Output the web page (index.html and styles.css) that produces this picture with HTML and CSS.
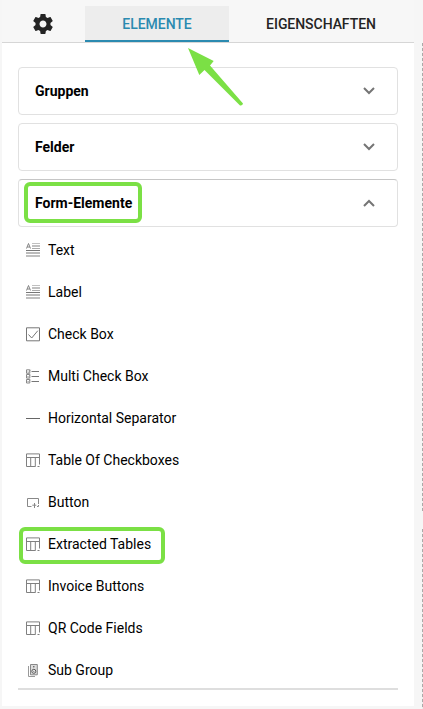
FILE: index.html
```html
<!DOCTYPE html>
<html lang="de">
<head>
<meta charset="utf-8">
<title>Elemente</title>
<link rel="stylesheet" href="styles.css">
</head>
<body>
<svg class="symbols" aria-hidden="true">
  <symbol id="lines" viewBox="0 0 14 15">
    <path d="M6 0h8v1H6zM6 2h8v2H6zM0 12h14v2H0z" fill="#c0c0c0"/>
    <path d="M6 5.5h8" stroke="#aaa"/>
    <path d="M0 7.5h14M0 10h14" stroke="#777"/>
    <path d="M.5 5.5L2.5.5l2 5M1.2 4h2.6" stroke="#777" stroke-width=".9"/>
  </symbol>
  <symbol id="check" viewBox="0 0 14 15">
    <path d="M.5 .8h13v13H.5z" stroke="#777"/>
    <path d="M2.5 7.5l3.2 3.5L11.8 3.7" stroke="#777"/>
  </symbol>
  <symbol id="multi" viewBox="0 0 14 15">
    <path d="M.5.8h3.3v3.5H.5zM.5 5.5h3.3v3.6H.5zM.5 10.5h3.3V14H.5z" stroke="#888"/>
    <path d="M1.3 2.5l1 1L4.5.8M1.3 7.4l1 .8 2-2.4M1.3 12.2l1 .8 2-2.2" stroke="#888" stroke-width=".7"/>
    <path d="M5.5 2.5H13M5.5 7.5h7.5M5.5 12.5H13" stroke="#777"/>
  </symbol>
  <symbol id="rule" viewBox="0 0 14 15"><path d="M0 7.5h14" stroke="#666"/></symbol>
  <symbol id="table" viewBox="0 0 14 15">
    <path d="M13.5 11.5V.9H.5v12.6h9M.5 4.5h13M4.7 4.5v9M9.3 4.5v9M11.5 13.5h2" stroke="#808080"/>
  </symbol>
  <symbol id="button" viewBox="0 0 14 15">
    <path d="M5.5 11.5h-4v-8h11v5.5M12.5 10v1.5h-1.5" stroke="#888"/>
    <path d="M8.5 13V8M6.3 10.2h4" stroke="#888"/>
  </symbol>
  <symbol id="group" viewBox="0 0 14 15">
    <path d="M2.5 3v10.5H9" stroke="#999"/>
    <path d="M4.5 1.5h6.8v10.3H4.5z" stroke="#888" fill="#ddd"/>
    <circle cx="7.8" cy="3.8" r=".8" fill="#555"/>
    <circle cx="7.8" cy="8.3" r="2" stroke="#555" fill="#eee"/>
    <circle cx="7.8" cy="8.3" r=".6" fill="#666"/>
  </symbol>
  <symbol id="chevron" viewBox="0 0 12 8"><path d="M1 1l5 5 5-5" stroke="#757575" stroke-width="2"/></symbol>
</svg>
<main class="panel">
  <nav class="tabs">
    <div class="tab settings">
      <svg class="gear" viewBox="2 2 20 20"><path fill="#242424" d="M19.43 12.98c.04-.32.07-.64.07-.98s-.03-.66-.07-.98l2.11-1.65c.19-.15.24-.42.12-.64l-2-3.46c-.12-.22-.39-.3-.61-.22l-2.49 1c-.52-.4-1.08-.73-1.69-.98l-.38-2.65C14.46 2.18 14.25 2 14 2h-4c-.25 0-.46.18-.49.42l-.38 2.65c-.61.25-1.17.59-1.69.98l-2.49-1c-.23-.09-.49 0-.61.22l-2 3.46c-.13.22-.07.49.12.64l2.11 1.65c-.04.32-.07.65-.07.98s.03.66.07.98l-2.11 1.65c-.19.15-.24.42-.12.64l2 3.46c.12.22.39.3.61.22l2.49-1c.52.4 1.08.73 1.69.98l.38 2.65c.03.24.24.42.49.42h4c.25 0 .46-.18.49-.42l.38-2.65c.61-.25 1.17-.59 1.69-.98l2.49 1c.23.09.49 0 .61-.22l2-3.46c.12-.22.07-.49-.12-.64l-2.11-1.65zM12 15.5c-1.93 0-3.5-1.57-3.5-3.5s1.57-3.5 3.5-3.5 3.5 1.57 3.5 3.5-1.57 3.5-3.5 3.5z"/></svg>
    </div>
    <div class="tab active">ELEMENTE</div>
    <div class="tab props">EIGENSCHAFTEN</div>
  </nav>
  <div class="content">
    <section class="card"><span>Gruppen</span><svg class="chevron"><use href="#chevron"/></svg></section>
    <section class="card"><span>Felder</span><svg class="chevron"><use href="#chevron"/></svg></section>
    <section class="card open"><span>Form-Elemente</span><svg class="chevron"><use href="#chevron"/></svg><i class="mark mark-title"></i></section>
    <ul class="items">
      <li><svg><use href="#lines"/></svg><span>Text</span></li>
      <li><svg><use href="#lines"/></svg><span>Label</span></li>
      <li><svg><use href="#check"/></svg><span>Check Box</span></li>
      <li><svg><use href="#multi"/></svg><span>Multi Check Box</span></li>
      <li><svg><use href="#rule"/></svg><span>Horizontal Separator</span></li>
      <li><svg><use href="#table"/></svg><span>Table Of Checkboxes</span></li>
      <li><svg><use href="#button"/></svg><span>Button</span></li>
      <li><svg><use href="#table"/></svg><span>Extracted Tables</span><i class="mark mark-item"></i></li>
      <li><svg><use href="#table"/></svg><span>Invoice Buttons</span></li>
      <li><svg><use href="#table"/></svg><span>QR Code Fields</span></li>
      <li><svg><use href="#group"/></svg><span>Sub Group</span></li>
    </ul>
  </div>
</main>
<aside class="canvas-edge"><div class="edge edge-top"></div><div class="edge edge-bottom"></div></aside>
<svg class="arrow" viewBox="0 0 56 60"><path fill="#7be045" d="M0 0L25.7 13 22 17.5 55 55.5Q54.5 58 52 57.5L16.5 22 11.3 27z"/></svg>
</body>
</html>
```
FILE: styles.css
```css
* { box-sizing: border-box; }
body {
  margin: 0;
  height: 709px;
  display: flex;
  overflow: hidden;
  background: #f6f6f6;
  color: #000;
  font-family: Roboto, sans-serif;
  font-size: 14px;
}
svg { fill: none; flex: none; }
.symbols { position: absolute; width: 0; height: 0; }
.panel { width: 412px; height: 706px; margin-left: 2px; background: #fff; }
.tabs {
  display: flex;
  height: 43px;
  padding-top: 6px;
  background: #f7f7f7;
  border-bottom: 1px solid #d6d6d6;
}
.tab {
  display: flex;
  align-items: center;
  justify-content: center;
  height: 36px;
  font-weight: 500;
  letter-spacing: -.05px;
  color: #242424;
}
.settings { width: 83px; padding: 0 1px 0 0; }
.gear { width: 20px; height: 20px; }
.active {
  width: 144px;
  padding-top: 2px;
  background: #ededed;
  color: #2b8ab0;
  border-bottom: 2px solid #2b8ab0;
}
.props { width: 185px; padding-right: 1px; }
.content { padding: 24px 16px 0; }
.card {
  position: relative;
  display: flex;
  align-items: center;
  justify-content: space-between;
  height: 48px;
  margin-bottom: 8px;
  padding: 0 22px 0 16px;
  border: 1px solid #e1e1e1;
  border-radius: 4px;
  font-weight: 700;
}
.open { margin-bottom: 2px; border-top-color: #c6c6c6; }
.open .chevron { transform: rotate(180deg); }
.chevron { width: 12px; height: 8px; }
.items {
  list-style: none;
  margin: 0;
  padding: 0;
  height: 461px;
  border-bottom: 2px solid #dedede;
}
.items li {
  position: relative;
  display: flex;
  align-items: center;
  gap: 8px;
  height: 42px;
  padding-left: 8px;
}
.items svg { width: 14px; height: 15px; margin-top: 1px; }
.mark { position: absolute; border: 4px solid #7be045; border-radius: 6px; }
.mark-title { left: 5px; top: 2px; width: 118px; height: 41px; }
.mark-item { left: 1px; top: 4px; width: 146px; height: 37px; }
.canvas-edge { width: 1px; margin-left: 8px; padding-top: 43px; }
.edge { background: repeating-linear-gradient(#aaa 0 3px, #eee 3px 5px); }
.edge-top { height: 468px; margin-bottom: 18px; }
.edge-bottom { height: 180px; }
.arrow { position: absolute; left: 188px; top: 48px; width: 56px; height: 60px; }
```
